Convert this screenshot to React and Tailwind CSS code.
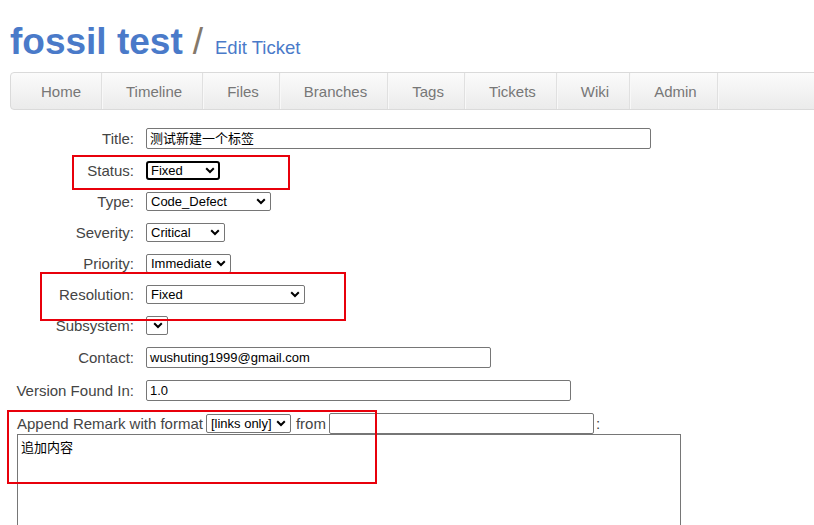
import React from "react";

const navItems = ["Home", "Timeline", "Files", "Branches", "Tags", "Tickets", "Wiki", "Admin"];

function Chevron() {
  return (
    <svg width="10" height="7" viewBox="0 0 10 7" className="shrink-0">
      <path d="M1.2 1.3 L5 5 L8.8 1.3" fill="none" stroke="#000" strokeWidth="2" />
    </svg>
  );
}

function Select({ value, width, focused }) {
  return (
    <div
      className={
        focused
          ? "flex items-center justify-between h-[19px] border-2 border-black rounded-[3px] pl-[3px] pr-[3px] bg-white"
          : "flex items-center justify-between h-[19px] border border-[#767676] rounded-[2px] pl-[4px] pr-[4px] bg-white"
      }
      style={{ width }}
    >
      <span className="text-[13px] text-black leading-none whitespace-nowrap">{value}</span>
      <Chevron />
    </div>
  );
}

function TextInput({ value, width }) {
  return (
    <div
      className="flex items-center h-[21px] border border-[#767676] rounded-[2px] px-[3px] bg-white text-[13px] text-black leading-none whitespace-nowrap"
      style={{ width }}
    >
      {value}
    </div>
  );
}

function Row({ label, h, children }) {
  return (
    <div className={"flex items-center " + h}>
      <div className="w-[134px] text-right text-[15px] text-[#444] leading-none whitespace-nowrap">{label}</div>
      <div className="ml-[12px] flex items-center">{children}</div>
    </div>
  );
}

export default function App() {
  return (
    <div
      className="relative w-[814px] h-[525px] overflow-hidden bg-white"
      style={{ fontFamily: '"Liberation Sans", Arial, "Noto Sans CJK SC", sans-serif' }}
    >
      <header className="pl-[10px] pt-[23px] flex items-baseline">
        <span className="text-[37px] leading-none font-bold text-[#4a7ac9]">fossil test</span>
        <span className="ml-[10px] text-[37px] leading-none text-[#84786a]">/</span>
        <span className="ml-[12px] text-[18.5px] leading-none text-[#4a7ac9]">Edit Ticket</span>
      </header>

      <nav className="mt-[12px] ml-[10px] w-[830px] h-[38px] flex items-stretch pl-[6px] border border-[#dadada] rounded-[4px] bg-gradient-to-b from-[#fbfbfb] to-[#ebebeb]">
        {navItems.map((item) => (
          <div
            key={item}
            className="flex items-center pl-[24px] pr-[20px] border-r border-[#e0e0e0] shadow-[1px_0_0_#f8f8f8] text-[15px] text-[#777] leading-none"
          >
            {item}
          </div>
        ))}
      </nav>

      <main className="mt-[12px]">
        <Row label="Title:" h="h-[33px]">
          <TextInput value="测试新建一个标签" width={505} />
        </Row>
        <Row label="Status:" h="h-[31px]">
          <Select value="Fixed" width={74} focused />
        </Row>
        <Row label="Type:" h="h-[31px]">
          <Select value="Code_Defect" width={125} />
        </Row>
        <Row label="Severity:" h="h-[31px]">
          <Select value="Critical" width={79} />
        </Row>
        <Row label="Priority:" h="h-[31px]">
          <Select value="Immediate" width={85} />
        </Row>
        <Row label="Resolution:" h="h-[31px]">
          <Select value="Fixed" width={159} />
        </Row>
        <Row label="Subsystem:" h="h-[31px]">
          <Select value="" width={22} />
        </Row>
        <Row label="Contact:" h="h-[33px]">
          <TextInput value="wushuting1999@gmail.com" width={345} />
        </Row>
        <Row label="Version Found In:" h="h-[33px]">
          <TextInput value="1.0" width={425} />
        </Row>

        <div className="mt-[6px] ml-[17px] h-[20px] flex items-center text-[15px] text-[#444] leading-none whitespace-nowrap">
          <span>Append Remark with format</span>
          <div className="ml-[3px]">
            <Select value="[links only]" width={85} />
          </div>
          <span className="ml-[5px]">from</span>
          <div className="ml-[3px]">
            <TextInput value="" width={265} />
          </div>
          <span className="ml-[2px]">:</span>
        </div>

        <div className="mt-[1px] ml-[17px] w-[664px] h-[150px] border border-[#767676] px-[3px] pt-[3px] text-[13px] text-black">
          追加内容
        </div>
      </main>

      <div className="absolute left-[72px] top-[155px] w-[218px] h-[35px] border-2 border-[#e8000b]" />
      <div className="absolute left-[40px] top-[272px] w-[306px] h-[49px] border-2 border-[#e8000b]" />
      <div className="absolute left-[7px] top-[410px] w-[370px] h-[74px] border-2 border-[#e8000b]" />
    </div>
  );
}
